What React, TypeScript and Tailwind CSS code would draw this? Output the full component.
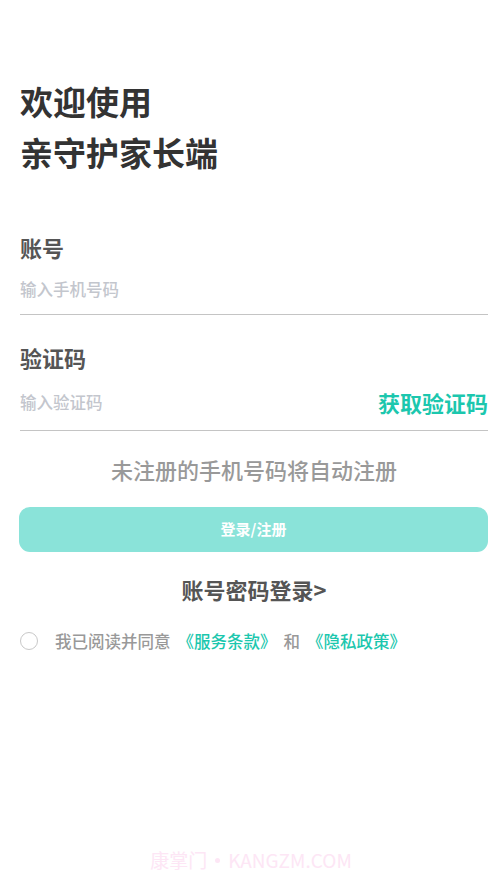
import React from 'react';

const font = { fontFamily: '"Noto Sans CJK SC", "Noto Sans", sans-serif' };

export default function App() {
  return (
    <div style={font} className="min-h-[883px] w-full bg-white flex flex-col px-[20px] text-[#333]">
      {/* Heading */}
      <h1 className="mt-[76px] text-[33px] leading-[51px] font-bold text-[#333]">
        欢迎使用
        <br />
        亲守护家长端
      </h1>

      {/* Account field */}
      <div className="mt-[54px]">
        <div className="text-[22px] leading-[30px] font-bold text-[#555]">账号</div>
        <div className="mt-[3px] h-[50px] flex items-center border-b border-[#c4c4c4] -mr-[11px]">
          <span className="text-[16.5px] font-medium text-[#c3c6cd]">输入手机号码</span>
        </div>
      </div>

      {/* Code field */}
      <div className="mt-[27px]">
        <div className="text-[22px] leading-[30px] font-bold text-[#555]">验证码</div>
        <div className="mt-[3px] h-[56px] flex items-center justify-between border-b border-[#c4c4c4] -mr-[11px]">
          <span className="text-[16.5px] font-medium text-[#c3c6cd]">输入验证码</span>
          <span className="text-[22px] font-bold text-[#1cc7ae]">获取验证码</span>
        </div>
      </div>

      <p className="mt-[23px] text-center text-[22px] leading-[30px] font-medium text-[#999] -mr-[11px]">
        未注册的手机号码将自动注册
      </p>

      <button className="mt-[23px] h-[45px] rounded-[11px] bg-[#8ae3d9] text-white text-[15px] font-bold -mr-[11px] -ml-[1px]">
        登录/注册
      </button>

      <p className="mt-[22px] text-center text-[22px] leading-[30px] font-bold text-[#555] -mr-[11px]">
        账号密码登录&gt;
      </p>

      {/* Agreement */}
      <div className="mt-[25px] flex items-center h-[24px] text-[16.5px] font-medium">
        <span className="w-[18px] h-[18px] rounded-full border border-[#c8c8c8] shrink-0" />
        <span className="ml-[17px] text-[#999]">我已阅读并同意</span>
        <span className="ml-[7px] text-[#1cc7ae]">《服务条款》</span>
        <span className="ml-[7px] text-[#999]">和</span>
        <span className="ml-[7px] text-[#1cc7ae]">《隐私政策》</span>
      </div>

      {/* Watermark */}
      <div className="mt-auto pb-[11px] flex justify-center items-center gap-[8px] text-[19px] leading-[24px] text-[#fde6f5] -mr-[11px] -ml-[6px]">
        <span>康掌门</span>
        <span className="w-[5px] h-[5px] rounded-full bg-[#fde6f5]" />
        <span>KANGZM.COM</span>
      </div>
    </div>
  );
}
